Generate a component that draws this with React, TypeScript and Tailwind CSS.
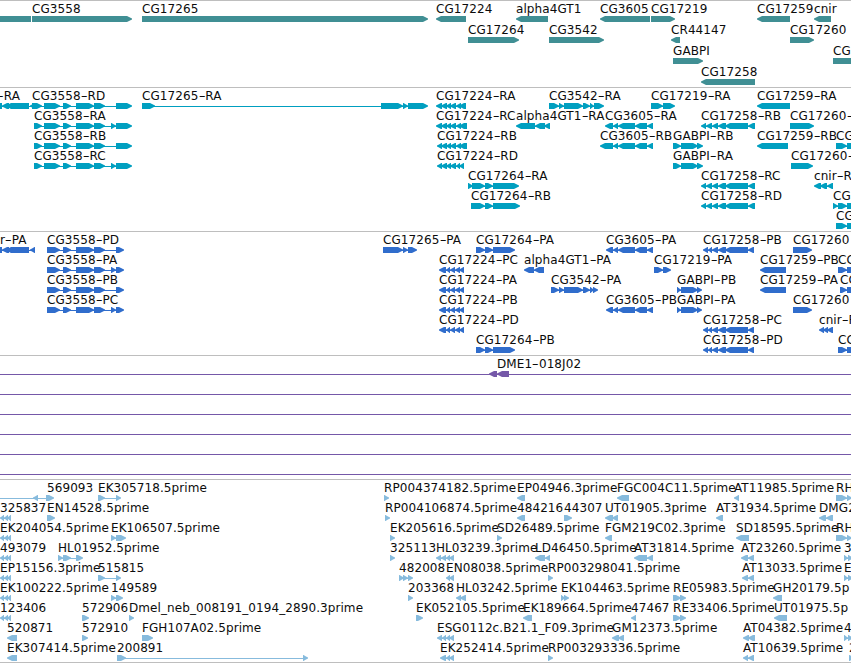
import { Fragment } from "react";

type Feature = { at?: number; label?: string; exons: string; joined?: boolean };
type Row = Feature[];

const f = (at: number, label: string, exons: string, joined = true): Feature => ({ at, label, exons, joined });

// An exon is written start-end followed by its strand: > forward, < reverse, = no head.
const rd = "44-60> 63-71> 76-94> 94-105>";
const short = "0-4< 4-8< 7-11<";
const cg3605 = "613-618< 618-635< 635-647< 647-653<";
const cg17258 = "712-718< 718-726< 725-748< 748-755<";
const cg17258p = "703-708< 708-712< 712-718< 718-726< 725-748< 748-754<";
const cg17224p = "439-446< 446-450< 450-455< 455-460< 459-464<";
const gabpi = "673-681> 681-698> 697-703>";
const gabpiP = "677-681> 681-698> 697-702>";

const genes: Row[] = [
  [
    { exons: "_-31=" },
    f(32, "CG3558", "32-132>"),
    f(142, "CG17265", "142-428>"),
    f(436, "CG17224", "436-466<"),
    f(516, "alpha4GT1", "516-548<"),
    f(600, "CG3605", "600-650<"),
    f(651, "CG17219", "651-675>"),
    f(757, "CG17259", "757-790<"),
    f(814, "cnir", "814-831<"),
  ],
  [
    f(468, "CG17264", "468-519>"),
    f(549, "CG3542", "549-604>"),
    f(671, "CR44147", "671-680<"),
    f(790, "CG17260", "790-814>"),
  ],
  [f(673, "GABPI", "673-703>"), f(833, "CG", "833-870>")],
  [f(701, "CG17258", "701-755<")],
];

const transcripts: Row[] = [
  [
    f(-3, "-RA", "_-2= 2-9< 6-29< 30-35<"),
    f(32, "CG3558-RD", `32-42> ${rd} 116-132>`),
    f(142, "CG17265-RA", "142-155> 381-403> 403-408> 408-428>"),
    f(436, "CG17224-RA", "436-442< 441-447< 446-451< 450-456< 456-461< 459-466<"),
    f(549, "CG3542-RA", "549-559> 559-564> 564-583> 583-590> 590-594> 594-604>"),
    f(651, "CG17219-RA", "651-663> 663-675>"),
    f(757, "CG17259-RA", "757-790<"),
  ],
  [
    f(34, "CG3558-RA", `34-42> ${rd} 111-116> 116-132>`),
    f(436, "CG17224-RC", "436-442< 441-447< 446-451< 450-456< 456-461< 459-467<"),
    f(516, "alpha4GT1-RA", "516-535< 535-545< 544-550<"),
    f(605, "CG3605-RA", `605-613< ${cg3605}`),
    f(701, "CG17258-RB", `701-706< 706-712< ${cg17258}`),
    f(790, "CG17260-", "790-814>"),
  ],
  [
    f(34, "CG3558-RB", `34-42> ${rd} 116-132>`),
    f(437, "CG17224-RB", "437-442< 441-447< 446-451< 450-456< 456-461< 459-467<"),
    f(600, "CG3605-RB", `600-613< ${cg3605}`),
    f(673, "GABPI-RB", gabpi),
    f(757, "CG17259-RB", "757-788<"),
    f(836, "CG", "836-847> 847-870>"),
  ],
  [
    f(34, "CG3558-RC", `34-42> ${rd} 111-116> 116-132>`),
    f(437, "CG17224-RD", "437-442< 441-447< 446-451< 450-456< 456-460< 459-464<"),
    f(673, "GABPI-RA", gabpi),
    f(791, "CG17260-", "791-813>"),
  ],
  [
    f(468, "CG17264-RA", "468-473> 472-485> 485-493> 493-519>"),
    f(701, "CG17258-RC", `701-706< 706-712< ${cg17258}`),
    f(814, "cnir-RA", "814-821< 820-827< 827-833<"),
  ],
  [
    f(471, "CG17264-RB", "471-485> 485-493> 493-520>"),
    f(701, "CG17258-RD", `701-706< 706-712< ${cg17258}`),
    f(833, "CG", "833-838> 838-847> 847-870>"),
  ],
  [f(836, "CG", "836-847> 847-870>")],
];

const proteins: Row[] = [
  [
    f(0, "r-PA", "_-2= 2-9< 6-29< 30-35<"),
    f(47, "CG3558-PD", "47-60> 63-71> 76-94> 94-105> 116-124>"),
    f(383, "CG17265-PA", "383-403> 403-408> 408-417>"),
    f(476, "CG17264-PA", "476-485> 485-493> 493-515>"),
    f(606, "CG3605-PA", `606-613< ${cg3605}`),
    f(703, "CG17258-PB", cg17258p),
    f(793, "CG17260", "793-812>"),
  ],
  [
    f(47, "CG3558-PA", "47-60> 63-71> 76-94> 94-105> 111-116> 116-124>"),
    f(439, "CG17224-PC", cg17224p),
    f(524, "alpha4GT1-PA", "524-534< 534-544<"),
    f(654, "CG17219-PA", "654-663> 663-671>"),
    f(760, "CG17259-PB", "760-786<"),
    f(838, "CG", "838-847> 847-870>"),
  ],
  [
    f(47, "CG3558-PB", "47-60> 63-71> 76-94> 94-105> 116-124>"),
    f(439, "CG17224-PA", cg17224p),
    f(551, "CG3542-PA", "551-559> 559-564> 564-583> 583-590> 590-594> 593-598>"),
    f(677, "GABPI-PB", gabpiP),
    f(760, "CG17259-PA", "760-786<"),
    f(840, "CG", "840-847> 847-870>"),
  ],
  [
    f(47, "CG3558-PC", "47-60> 63-71> 76-94> 94-105> 111-116> 116-124>"),
    f(439, "CG17224-PB", cg17224p),
    f(606, "CG3605-PB", `606-613< ${cg3605}`),
    f(677, "GABPI-PA", gabpiP),
    f(793, "CG17260", "793-812>"),
  ],
  [
    f(439, "CG17224-PD", cg17224p),
    f(703, "CG17258-PC", cg17258p),
    f(819, "cnir-PA", "819-824< 823-828< 827-833<"),
  ],
  [
    f(476, "CG17264-PB", "476-485> 485-493> 493-515>"),
    f(703, "CG17258-PD", cg17258p),
    f(838, "CG", "838-847> 847-870>"),
  ],
];

const line: Feature = { exons: "_-0= 870-880=", joined: true };
const clones: Row[] = [[line, f(497, "DME1-018J02", "489-497< 497-509<")], [line], [line], [line], [line], [line]];

const ests: Row[] = [
  [
    f(47, "569093", "_-0= 33-38< 46-54>"),
    f(98, "EK305718.5prime", "98-105> 116-121>"),
    f(384, "RP004374182.5prime", "384-389>"),
    f(517, "EP04946.3prime", "517-525<"),
    f(617, "FGC004C11.5prime", "617-629<"),
    f(734, "AT11985.5prime", "734-739<"),
    f(836, "RH", "836-847> 847-852>"),
  ],
  [
    f(0, "325837", short),
    f(47, "EN14528.5prime", "47-55>"),
    f(385, "RP004106874.5prime", "385-390>"),
    f(517, "484216", "517-525<"),
    f(564, "44307", "564-572>"),
    f(605, "UT01905.3prime", "605-613< 612-618<"),
    f(716, "AT31934.5prime", "716-723<"),
    f(819, "DMG2", "819-826< 826-833<"),
  ],
  [
    f(0, "EK204054.5prime", short),
    f(111, "EK106507.5prime", "111-116> 116-126>"),
    f(390, "EK205616.5prime", "390-395>"),
    f(497, "SD26489.5prime", "497-502>"),
    f(605, "FGM219C02.3prime", "605-612<"),
    f(736, "SD18595.5prime", "736-749<"),
    f(836, "RH", "836-847> 847-852>"),
  ],
  [
    f(0, "493079", short),
    f(58, "HL01952.5prime", "58-63> 63-71> 76-83>"),
    f(390, "325113", "390-395>"),
    f(436, "HL03239.3prime", "436-441< 441-446< 446-450< 449-454<"),
    f(535, "LD46450.5prime", "535-545< 545-550<"),
    f(634, "AT31814.5prime", "634-647< 647-653<"),
    f(741, "AT23260.5prime", "741-748< 748-754<"),
    f(844, "3", "844-848> 848-853>"),
  ],
  [
    f(0, "EP15156.3prime", short),
    f(98, "515815", "98-105> 116-121>"),
    f(399, "482008", "399-404> 403-408> 408-413>"),
    f(446, "EN08038.5prime", "446-450< 449-454<"),
    f(548, "RP003298041.5prime", "548-553>"),
    f(742, "AT13033.5prime", "742-748< 748-754<"),
    f(844, "E", "844-848> 848-853>"),
  ],
  [
    f(0, "EK100222.5prime", short),
    f(111, "149589", "111-116> 116-123>"),
    f(408, "203368", "408-413>"),
    f(456, "HL03242.5prime", "456-461< 460-466<"),
    f(561, "EK104463.5prime", "561-565> 564-569>"),
    f(673, "RE05983.5prime", "673-681> 680-686>"),
    f(773, "GH20179.5p", "773-782<"),
  ],
  [
    f(0, "123406", short),
    f(82, "572906", "82-89>"),
    f(129, "Dmel_neb_008191_0194_2890.3prime", "129-134>"),
    f(416, "EK052105.5prime", "416-423>"),
    f(523, "EK189664.5prime", "523-532<"),
    f(631, "47467", "631-636<"),
    f(673, "RE33406.5prime", "673-681> 680-686>"),
    f(774, "UT01975.5p", "774-787<"),
  ],
  [
    f(7, "520871", "7-17<"),
    f(82, "572910", "82-88>"),
    f(142, "FGH107A02.5prime", "142-153>"),
    f(437, "ESG0112c.B21.1_F09.3prime", "437-442< 442-446< 446-450< 449-454<"),
    f(612, "GM12373.5prime", "612-619< 618-624<"),
    f(743, "AT04382.5prime", "743-749< 748-755<"),
    f(844, "4", "844-848> 848-853>"),
  ],
  [
    f(7, "EK307414.5prime", "7-17<"),
    f(117, "200891", "117-126> 303-308>"),
    f(440, "EK252414.5prime", "440-446< 446-450< 449-454<"),
    f(548, "RP003293336.5prime", "548-553>"),
    f(743, "AT10639.5prime", "743-748< 748-754<"),
    f(849, "2", "849-854>"),
  ],
];

function parse(exons: string) {
  return exons.split(" ").map((part) => {
    const [a, b] = part.slice(0, -1).split("-");
    return { a: a === "_" ? -20 : Number(a), b: Number(b), dir: part.slice(-1) };
  });
}

// A bar six pixels high whose head curves in to a one-pixel tip.
function outline(a: number, b: number, dir: string) {
  const head = Math.min(5, b - a - 0.5);
  const s = Math.min(2, head / 2);
  if (dir === ">") return `${a},0 ${b - head},0 ${b - s},1.4 ${b},2.5 ${b},3.5 ${b - s},4.6 ${b - head},6 ${a},6`;
  if (dir === "<") return `${b},0 ${a + head},0 ${a + s},1.4 ${a},2.5 ${a},3.5 ${a + s},4.6 ${a + head},6 ${b},6`;
  return `${a},0 ${b},0 ${b},6 ${a},6`;
}

function Glyphs({ row }: { row: Row }) {
  return (
    <svg width="851" height="6" className="block shrink-0 fill-current">
      {row.map((feature, i) => {
        const parts = parse(feature.exons);
        const start = parts[0].a;
        const end = parts[parts.length - 1].b - 3;
        return (
          <g key={i}>
            {parts.length > 1 && feature.joined && <rect x={start + 1} y="3" width={end - start - 1} height="1" />}
            {parts.map((p, j) => (
              <polygon key={j} points={outline(p.a, p.b, p.dir)} />
            ))}
          </g>
        );
      })}
    </svg>
  );
}

function Label({ text, at }: { text: string; at: number }) {
  return (
    <span
      className="absolute top-0 text-[12px] leading-[16px] tracking-[0.08px] whitespace-pre text-[#0c0c0c]"
      style={{ left: at }}
    >
      {text.split("-").map((part, i) => (
        <Fragment key={i}>
          {i > 0 && <span className="mx-[1.2px] inline-block scale-x-[1.6]">-</span>}
          {part}
        </Fragment>
      ))}
    </span>
  );
}

function Track({ rows, color, rowClass, end }: { rows: Row[]; color: string; rowClass: string; end: string }) {
  return (
    <section className={`flex flex-col border-t border-[#bebebe] ${color} ${end}`}>
      {rows.map((row, i) => (
        <div key={i} className={`relative flex flex-col pt-[15px] ${rowClass}`}>
          {row.map((feature, j) => feature.label && <Label key={j} text={feature.label} at={feature.at ?? 0} />)}
          <Glyphs row={row} />
        </div>
      ))}
    </section>
  );
}

export default function App() {
  return (
    <main className="flex h-[663px] w-[851px] flex-col overflow-hidden border-b border-[#bebebe] bg-white font-['DejaVu_Sans',sans-serif]">
      <Track rows={genes} color="text-[#408f94]" rowClass="h-[21px]" end="pb-[2px]" />
      <Track rows={transcripts} color="text-[#009fc0]" rowClass="h-[20px]" end="pb-[3px]" />
      <Track rows={proteins} color="text-[#306dcc]" rowClass="h-[20px]" end="pb-[3px]" />
      <Track rows={clones} color="text-[#7558a8]" rowClass="h-[20px]" end="pb-[3px]" />
      <Track rows={ests} color="text-[#87bbdd]" rowClass="h-[20px]" end="pb-[2px]" />
    </main>
  );
}
